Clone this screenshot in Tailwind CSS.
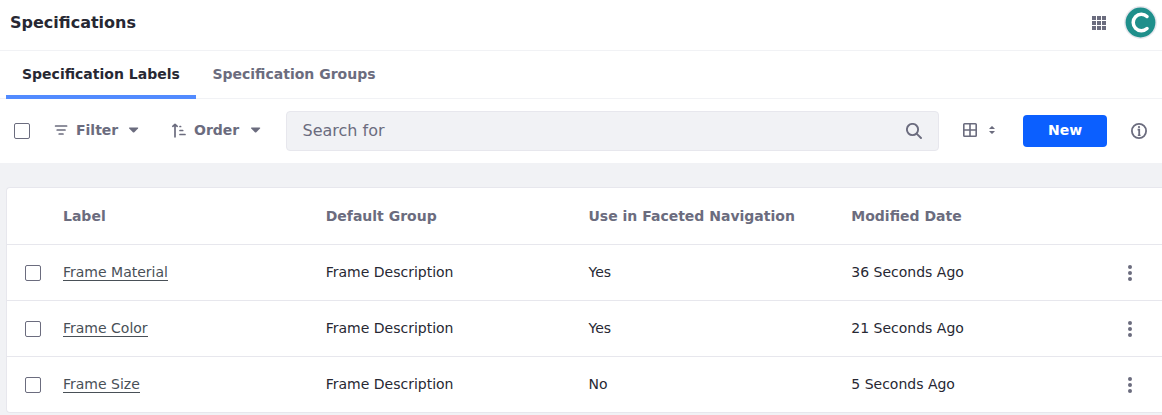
<!DOCTYPE html>
<html lang="en">
<head>
<meta charset="utf-8">
<title>Specifications</title>
<script src="https://cdn.jsdelivr.net/npm/@tailwindcss/browser@4"></script>
</head>
<body class="w-[1162px] h-[415px] overflow-hidden bg-[#f1f2f5] font-['DejaVu_Sans',sans-serif] text-sm text-[#272833]">
<header class="flex h-[51px] items-center border-b border-[#f1f2f5] bg-white pl-2.5 pr-[5px] pb-[5px]">
  <h1 class="flex-1 text-base leading-6 font-bold">Specifications</h1>
  <svg class="mr-[18px] size-[14px]" viewBox="0 0 14 14" fill="#6b6c7e"><path d="M0 0h4v4H0zM5 0h4v4H5zM10 0h4v4h-4zM0 5h4v4H0zM5 5h4v4H5zM10 5h4v4h-4zM0 10h4v4H0zM5 10h4v4H5zM10 10h4v4h-4z"/></svg>
  <svg class="size-[33px]" viewBox="0 0 33 33"><circle cx="16.5" cy="16.5" r="16.4" fill="#e7e7ed"/><circle cx="16.5" cy="16.5" r="14.9" fill="#1f8f8b"/><path d="M23 10.5A8.2 8.2 0 1 0 23 22.5" fill="none" stroke="#fff" stroke-width="3.5" stroke-linecap="round"/></svg>
</header>
<nav class="flex h-12 border-b border-[#f1f2f5] bg-white pl-1.5 font-bold">
  <a class="h-12 w-[190px] border-b-4 border-[#528bff] pt-[13px] pl-4 leading-[21px] whitespace-nowrap">Specification Labels</a>
  <a class="pt-[13px] pl-[16.4px] leading-[21px] whitespace-nowrap text-[#6b6c7e]">Specification Groups</a>
</nav>
<div class="flex h-16 items-center bg-white pl-3.5 pr-[15px] font-bold text-[#6b6c7e]">
  <span class="mr-6 size-4 rounded-xs border border-[#6b6c7e] bg-white"></span>
  <div class="flex w-[117px] items-center pb-0.5">
    <svg class="mr-2 size-[14px]" viewBox="0 0 14 14" stroke="#6b6c7e" stroke-width="1.7" stroke-linecap="round"><path d="M1.6 3h11M3.2 7h7.8M5.2 11h3.8"/></svg>
    <span class="w-[51.5px] leading-[21px]">Filter</span>
    <svg class="h-[6px] w-[11px]" viewBox="0 0 11 6" fill="#6b6c7e"><path d="M1.6 .5h8q1.1 .1 .4 .9L6.3 5.3q-.7.6-1.4 0L1.2 1.4Q.5.6 1.6.5z"/></svg>
  </div>
  <div class="flex w-[115px] items-center pb-0.5">
    <svg class="mr-2 size-[15px]" viewBox="0 0 15 15" fill="none" stroke="#6b6c7e" stroke-width="1.7" stroke-linecap="round" stroke-linejoin="round"><path d="M4 13.8V2M1.8 3.3 4 1.4 6.2 3.3M9 3.5h.6M9 7.5h2.7M9 11.5h5"/></svg>
    <span class="w-[55.5px] leading-[21px]">Order</span>
    <svg class="h-[6px] w-[11px]" viewBox="0 0 11 6" fill="#6b6c7e"><path d="M1.6 .5h8q1.1 .1 .4 .9L6.3 5.3q-.7.6-1.4 0L1.2 1.4Q.5.6 1.6.5z"/></svg>
  </div>
  <div class="flex h-10 w-[653px] items-center rounded border border-[#e7e7ed] bg-[#f1f2f5] pl-[15.5px] pr-4 text-base font-normal">
    <span class="flex-1 pb-px">Search for</span>
    <svg class="size-4" viewBox="0 0 16 16" fill="none" stroke="#6b6c7e" stroke-width="1.9" stroke-linecap="round"><circle cx="6.5" cy="6.5" r="5.6"/><path d="m10.8 10.8 4.2 4.2"/></svg>
  </div>
  <svg class="mb-0.5 ml-6 size-[14px]" viewBox="0 0 14 14" fill="none" stroke="#6b6c7e" stroke-width="1.6"><rect x=".8" y=".8" width="12.4" height="12.4" rx=".8"/><path d="M7 1v12M1 7h12"/></svg>
  <svg class="mb-0.5 ml-3 h-2 w-[6px]" viewBox="0 0 6 8" fill="#6b6c7e"><path d="M0 3 2.6.2h.8L6 3zM0 5h6L3.4 7.8h-.8z"/></svg>
  <span class="ml-7 h-8 w-[84px] rounded bg-[#0b5fff] text-center leading-[30px] text-white">New</span>
  <svg class="ml-6 size-4" viewBox="0 0 16 16" fill="none" stroke="#6b6c7e"><circle cx="8" cy="8" r="7.1" stroke-width="1.8"/><path d="M6.6 6.7H8.2V12.9" stroke-width="1.8"/><path d="M6.8 12.3h2.8" stroke-width="1.2"/><circle cx="8" cy="4.1" r="1.1" fill="#6b6c7e" stroke="none"/></svg>
</div>
<main class="mt-6 ml-1.5">
  <div class="rounded-l border border-r-0 border-[#e7e7ed] bg-white">
    <div class="grid h-14 grid-cols-[56px_262.7px_262.8px_262.8px_1fr] items-center font-bold text-[#6b6c7e]">
      <span></span><span>Label</span><span>Default Group</span><span>Use in Faceted Navigation</span><span>Modified Date</span>
    </div>
    <div class="grid h-14 grid-cols-[56px_262.7px_262.8px_262.8px_1fr_38px] items-center border-t border-[#e7e7ed]">
      <span class="ml-[18px] size-4 rounded-xs border border-[#6b6c7e]"></span>
      <span class="flex"><a class="border-b border-[#495057] leading-4 text-[#495057]">Frame Material</a></span><span class="pb-px">Frame Description</span><span class="pb-px">Yes</span><span class="pb-px">36 Seconds Ago</span>
      <svg class="h-4 w-3" viewBox="0 0 12 16" fill="#6b6c7e"><circle cx="6" cy="2" r="2"/><circle cx="6" cy="8" r="2"/><circle cx="6" cy="14" r="2"/></svg>
    </div>
    <div class="grid h-14 grid-cols-[56px_262.7px_262.8px_262.8px_1fr_38px] items-center border-t border-[#e7e7ed]">
      <span class="ml-[18px] size-4 rounded-xs border border-[#6b6c7e]"></span>
      <span class="flex"><a class="border-b border-[#495057] leading-4 text-[#495057]">Frame Color</a></span><span class="pb-px">Frame Description</span><span class="pb-px">Yes</span><span class="pb-px">21 Seconds Ago</span>
      <svg class="h-4 w-3" viewBox="0 0 12 16" fill="#6b6c7e"><circle cx="6" cy="2" r="2"/><circle cx="6" cy="8" r="2"/><circle cx="6" cy="14" r="2"/></svg>
    </div>
    <div class="grid h-14 grid-cols-[56px_262.7px_262.8px_262.8px_1fr_38px] items-center border-t border-[#e7e7ed]">
      <span class="ml-[18px] size-4 rounded-xs border border-[#6b6c7e]"></span>
      <span class="flex"><a class="border-b border-[#495057] leading-4 text-[#495057]">Frame Size</a></span><span class="pb-px">Frame Description</span><span class="pb-px">No</span><span class="pb-px">5 Seconds Ago</span>
      <svg class="h-4 w-3" viewBox="0 0 12 16" fill="#6b6c7e"><circle cx="6" cy="2" r="2"/><circle cx="6" cy="8" r="2"/><circle cx="6" cy="14" r="2"/></svg>
    </div>
  </div>
</main>
</body>
</html>
